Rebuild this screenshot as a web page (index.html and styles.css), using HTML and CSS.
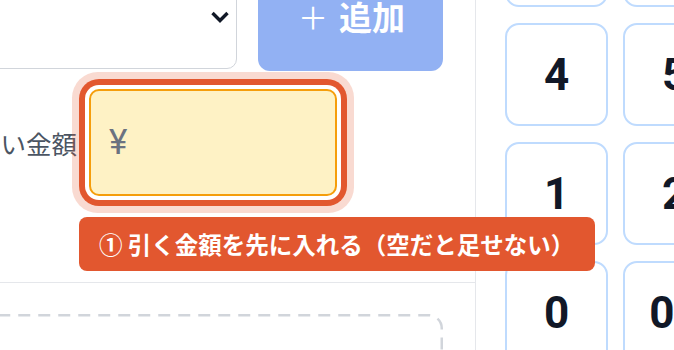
FILE: index.html
```html
<!DOCTYPE html>
<html lang="ja">
<head>
<meta charset="utf-8">
<title>金額入力</title>
<link rel="stylesheet" href="styles.css">
</head>
<body>
<div class="app">
  <section class="left">
    <div class="form-top">
      <div class="row-top">
        <div class="select">
          <svg class="chevron" width="20" height="14" viewBox="0 0 20 14" aria-hidden="true">
            <polyline points="2.5,3 10,10.5 17.5,3" fill="none" stroke="#111827" stroke-width="3.4" stroke-linejoin="miter" stroke-linecap="butt"/>
          </svg>
        </div>
        <button class="add"><span class="plus">＋</span><span>追加</span></button>
      </div>
      <div class="row-amount">
        <label class="label">い金額</label>
        <div class="field">
          <div class="input">¥</div>
          <div class="tip">① 引く金額を先に入れる（空だと足せない）</div>
        </div>
      </div>
    </div>
    <div class="list">
      <div class="dropzone">
        <svg class="dash" width="459" height="100" viewBox="0 0 459 100" aria-hidden="true">
          <rect x="1.25" y="1.25" width="456.5" height="97.5" rx="13" ry="13" fill="none" stroke="#d1d5db" stroke-width="2.5" stroke-dasharray="12 8"/>
        </svg>
      </div>
    </div>
  </section>
  <aside class="pad">
    <div class="keys">
      <button class="key">7</button>
      <button class="key">8</button>
      <button class="key">9</button>
      <button class="key">4</button>
      <button class="key">5</button>
      <button class="key">6</button>
      <button class="key">1</button>
      <button class="key">2</button>
      <button class="key">3</button>
      <button class="key">0</button>
      <button class="key">00</button>
      <button class="key">C</button>
    </div>
  </aside>
</div>
</body>
</html>
```
FILE: styles.css
```css
html, body {
  margin: 0;
  width: 674px;
  height: 350px;
  overflow: hidden;
  background: #ffffff;
}

body {
  font-family: Roboto, "Noto Sans CJK JP", sans-serif;
  color: #111827;
}

.app {
  display: flex;
  height: 350px;
}

.left {
  flex: 0 0 516px;
  margin-left: -40px;
  box-sizing: border-box;
  border-right: 1px solid #e5e7eb;
}

.form-top {
  padding: 0 32px 86px 24px;
  border-bottom: 1px solid #e5e7eb;
}

.row-top {
  display: flex;
  align-items: flex-start;
  gap: 21px;
  margin-top: -35px;
}

.select {
  flex: 1;
  height: 104px;
  box-sizing: border-box;
  border: 1.5px solid #d1d5db;
  border-radius: 10px;
  display: flex;
  align-items: center;
  justify-content: flex-end;
  padding-right: 6px;
}

.chevron {
  display: block;
}

.add {
  flex: 0 0 185px;
  height: 106px;
  border: none;
  border-radius: 12px;
  background: #92b1f3;
  color: #ffffff;
  font-family: "Noto Sans CJK JP", sans-serif;
  font-weight: 700;
  font-size: 33px;
  display: flex;
  align-items: center;
  justify-content: center;
  gap: 11px;
  padding: 0 0 5px 2px;
}

.plus {
  font-weight: 400;
  font-size: 30px;
}

.row-amount {
  display: flex;
  align-items: center;
  gap: 12px;
  margin-top: 18px;
}

.label {
  flex: 0 0 93px;
  text-align: right;
  white-space: nowrap;
  font-family: "Noto Sans CJK JP", sans-serif;
  font-size: 25.5px;
  color: #4b5563;
}

.field {
  position: relative;
  flex: 0 0 248px;
}

.input {
  height: 107px;
  box-sizing: border-box;
  border: 2px solid #f59e0b;
  border-radius: 10px;
  background: #fef2c5;
  box-shadow: 0 0 0 4px #ffffff, 0 0 0 10px #e2572f, 0 0 0 17px rgba(226, 87, 47, 0.22);
  display: flex;
  align-items: center;
  padding-left: 18px;
  font-size: 35px;
  color: #6b7280;
}

.tip {
  position: absolute;
  left: -10px;
  top: 128px;
  width: 516px;
  height: 54px;
  box-sizing: border-box;
  padding-left: 20px;
  border-radius: 8px;
  background: #e2572f;
  color: #ffffff;
  font-family: "Noto Sans CJK JP", sans-serif;
  font-weight: 700;
  font-size: 23.5px;
  white-space: nowrap;
  display: flex;
  align-items: center;
  z-index: 2;
}

.list {
  padding: 31px 32px 0 24px;
}

.dropzone {
  height: 100px;
}

.dash {
  display: block;
}

.pad {
  flex: 1;
  padding-left: 29px;
}

.keys {
  display: grid;
  grid-template-columns: repeat(3, 103px);
  grid-auto-rows: 103px;
  column-gap: 15px;
  row-gap: 16px;
  margin-top: -96px;
}

.key {
  box-sizing: border-box;
  border: 2px solid #bfdbfe;
  border-radius: 14px;
  background: #ffffff;
  color: #111827;
  font-family: Roboto, sans-serif;
  font-weight: 700;
  font-size: 44px;
  display: flex;
  align-items: center;
  justify-content: center;
  padding: 0;
}
```
